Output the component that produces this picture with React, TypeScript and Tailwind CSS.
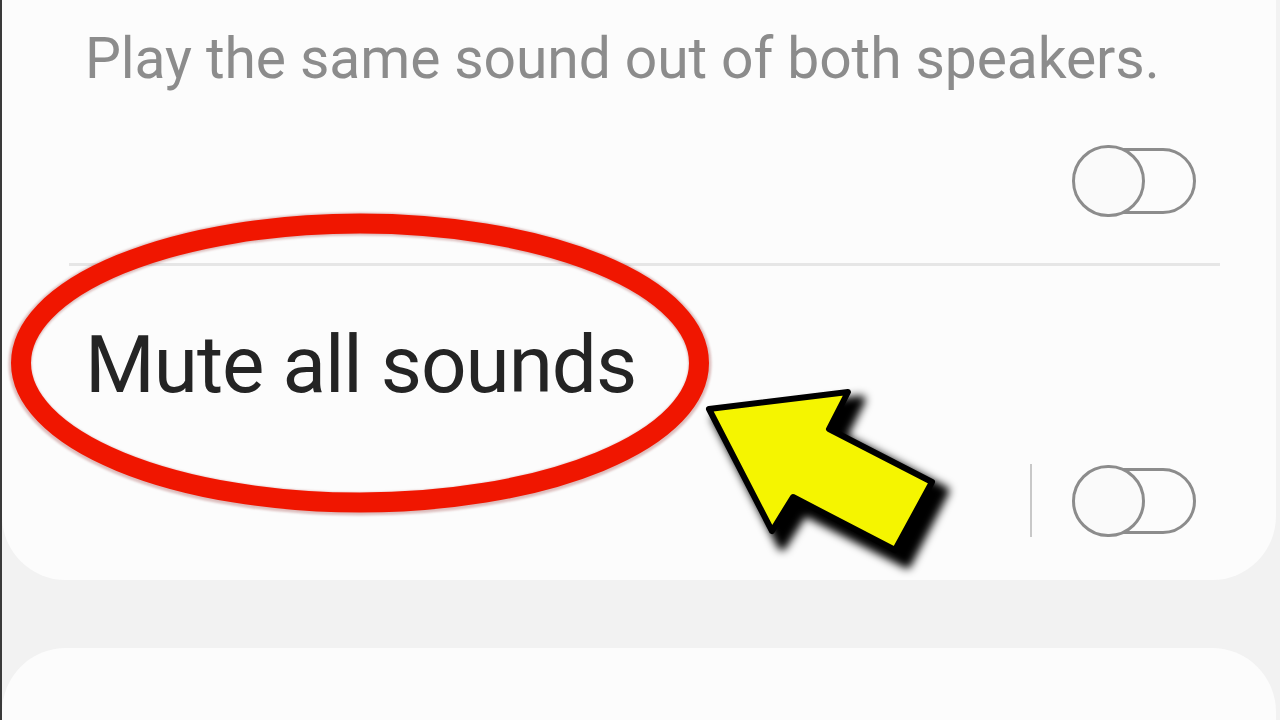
import React from "react";

function Toggle() {
  return (
    <div className="relative h-[72px] w-[124px]">
      <div className="absolute right-0 top-[3px] h-[66px] w-[108px] rounded-full border-[3px] border-[#8c8c8c]" />
      <div className="absolute left-0 top-0 h-[72px] w-[73px] rounded-full border-[3px] border-[#8c8c8c] bg-[#fafafa]" />
    </div>
  );
}

function Annotations() {
  return (
    <svg
      className="pointer-events-none absolute inset-0"
      width={1280}
      height={720}
      viewBox="0 0 1280 720"
    >
      <defs>
        <filter id="soft" x="-10%" y="-10%" width="120%" height="120%">
          <feGaussianBlur stdDeviation="1.2" />
        </filter>
        <filter id="shadow" x="-20%" y="-20%" width="140%" height="140%">
          <feGaussianBlur stdDeviation="4.5" />
        </filter>
      </defs>

      {/* red circle round the title */}
      <ellipse cx={358} cy={364} rx={340} ry={140} fill="none" stroke="#7a0a00" strokeOpacity={0.25} strokeWidth={23} filter="url(#soft)" />
      <ellipse cx={358} cy={363} rx={339} ry={139.5} fill="none" stroke="#f01600" strokeWidth={20} />

      {/* yellow arrow */}
      <polygon
        points="704,407 849,389 830,427 933,480 895,553 792,500 770,535"
        transform="translate(10,11)"
        fill="#000"
        stroke="#000"
        strokeWidth={9}
        strokeLinejoin="round"
        filter="url(#shadow)"
      />
      <polygon
        points="707,409 846,392 827,429 930,482 893,550 791,497 770,531"
        fill="#f5f500"
        stroke="#000"
        strokeWidth={6}
        strokeLinejoin="round"
      />
    </svg>
  );
}

export default function App() {
  return (
    <div className="relative h-[720px] w-[1280px] overflow-hidden border-l-2 border-[#3a3a3a] bg-[#f2f2f2] font-['Roboto',sans-serif]">
      <div className="flex flex-col">
        <section className="mr-[4px] flex h-[580px] flex-col rounded-b-[64px] bg-[#fcfcfc]">
          <p className="pl-[83px] pt-[25px] text-[57px] leading-[68px] tracking-[-0.1px] text-[#8c8c8c]">
            Play the same sound out of both speakers.
          </p>

          <div className="mt-[52px] flex justify-end pr-[80px]">
            <Toggle />
          </div>

          <div className="ml-[67px] mr-[56px] mt-[46px] h-[3px] bg-[#e6e6e6]" />

          <h2 className="mt-[53px] pl-[83px] text-[80px] leading-[93px] tracking-[-1px] text-[#242424]">
            Mute all sounds
          </h2>

          <div className="mt-[52px] flex items-center justify-end gap-[40px] pr-[80px]">
            <div className="h-[73px] w-[2px] bg-[#c8c8c8]" />
            <Toggle />
          </div>
        </section>

        <section className="mr-[4px] mt-[68px] h-[200px] rounded-t-[64px] bg-[#fcfcfc]" />
      </div>

      <Annotations />
    </div>
  );
}
